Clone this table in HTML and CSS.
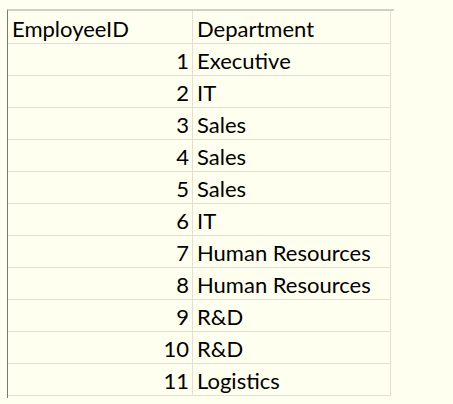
FILE: index.html
```html
<!DOCTYPE html>
<html>
<head>
<meta charset="utf-8">
<link rel="stylesheet" href="styles.css">
</head>
<body>
<div class="sheet">
  <div class="cell head">EmployeeID</div><div class="cell head dept">Department</div>
  <div class="cell num">1</div><div class="cell dept">Executive</div>
  <div class="cell num">2</div><div class="cell dept">IT</div>
  <div class="cell num">3</div><div class="cell dept">Sales</div>
  <div class="cell num">4</div><div class="cell dept">Sales</div>
  <div class="cell num">5</div><div class="cell dept">Sales</div>
  <div class="cell num">6</div><div class="cell dept">IT</div>
  <div class="cell num">7</div><div class="cell dept">Human Resources</div>
  <div class="cell num">8</div><div class="cell dept">Human Resources</div>
  <div class="cell num">9</div><div class="cell dept">R&amp;D</div>
  <div class="cell num">10</div><div class="cell dept">R&amp;D</div>
  <div class="cell num">11</div><div class="cell dept">Logistics</div>
</div>
</body>
</html>
```
FILE: styles.css
```css
html, body {
  margin: 0;
  padding: 0;
  background: #fffff0;
}
body {
  padding: 9px 0 0 7px;
  font-family: Lato, "Open Sans", sans-serif;
  color: #000;
}
.sheet {
  display: grid;
  grid-template-columns: 185px 198px;
  width: 386px;
  padding-bottom: 2px;
  border-left: 1px solid #7a7a72;
  border-top: 2px solid #cfcfc6;
}
.cell {
  height: 30px;
  padding: 1px 3px 0 4px;
  border-bottom: 1px solid #e6dccf;
  border-right: 1px solid #e6dccf;
  font-size: 22px;
  line-height: 31px;
  white-space: nowrap;
}
.head {
  height: 28px;
  padding-top: 4px;
  line-height: 28px;
}
.num {
  text-align: right;
}
.dept {
  padding-left: 4px;
}
```
